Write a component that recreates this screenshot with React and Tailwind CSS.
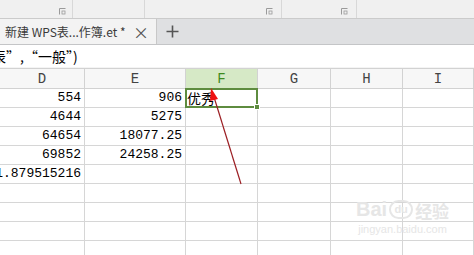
import React from 'react';

const cols = ['D', 'E', 'F', 'G', 'H', 'I'];
const rows = [
  ['554', '906', '优秀'],
  ['4644', '5275', ''],
  ['64654', '18077.25', ''],
  ['69852', '24258.25', ''],
  ['1.879515216', '', ''],
  ['', '', ''],
  ['', '', ''],
  ['', '', ''],
  ['', '', ''],
];

const gridCols = 'grid grid-cols-[85px_101px_72px_73px_72px_71px]';
const cjk = { fontFamily: '"Noto Sans CJK SC", "Liberation Sans", sans-serif' };
const sans = { fontFamily: '"Liberation Sans", Arial, sans-serif' };

function GroupMark() {
  return (
    <svg width="7" height="7" viewBox="0 0 7 7" className="text-[#9a9a9a]">
      <path d="M0.5 6.5V0.5H6.5" fill="none" stroke="currentColor" />
      <rect x="3" y="3" width="3" height="3" fill="none" stroke="currentColor" strokeWidth="0.8" />
    </svg>
  );
}

export default function App() {
  return (
    <div className="relative w-[474px] h-[255px] overflow-hidden bg-white" style={cjk}>
      {/* ribbon strip */}
      <div className="flex h-[19px] bg-[#f0f0f0] border-b border-[#cbcbcb]">
        <div className="w-[73px] border-r border-[#d8d8d8] flex items-end justify-end pr-[6px] pb-[3px]"><GroupMark /></div>
        <div className="w-[72px] border-r border-[#d8d8d8]" />
        <div className="w-[137px] border-r border-[#d8d8d8] flex items-end justify-end pr-[8px] pb-[3px]"><GroupMark /></div>
        <div className="w-[75px] border-r border-[#d8d8d8] flex items-end justify-end pr-[8px] pb-[3px]"><GroupMark /></div>
        <div className="flex-1" />
      </div>

      {/* tabs */}
      <div className="flex h-[26px] bg-[#dfe0e2] border-b border-[#c4c5c7]">
        <div className="w-[157px] bg-[#f3f3f3] border-r border-[#c8c8c8] flex items-center pl-[5px] text-[12px] text-[#3a3a3a]">
          <span className="whitespace-nowrap">新建 WPS表...作簿.et *</span>
          <span className="ml-auto mr-[7px] text-[#555] text-[16px] leading-none">×</span>
        </div>
        <div className="flex items-center pl-[9px]">
          <svg width="13" height="13" viewBox="0 0 13 13" className="text-[#555]">
            <path d="M6.5 0.5V12.5M0.5 6.5H12.5" stroke="currentColor" strokeWidth="1.6" />
          </svg>
        </div>
      </div>

      {/* formula bar */}
      <div className="h-[22px] bg-white flex items-center overflow-hidden">
        <span className="-ml-[8px] text-[14px] text-black whitespace-nowrap leading-none">表”,“一般”)</span>
      </div>
      <div className="h-[2px] bg-[#f4f4f4] border-b border-[#d2d2d2]" />

      {/* column headers */}
      <div className={`${gridCols} h-[20px] bg-[#f7f7f7] border-b border-[#d2d2d2] font-['Liberation_Mono',monospace]`}>
        {cols.map((c) => (
          <div
            key={c}
            className={`border-r border-[#d2d2d2] flex items-center justify-center text-[14px] ${c === 'F' ? 'bg-[#d6e9c6] text-[#3e8a1e]' : 'text-[#444]'}`}
          >
            {c}
          </div>
        ))}
      </div>

      {/* rows */}
      {rows.map((r, i) => (
        <div key={i} className={`${gridCols} h-[19px] font-['Liberation_Mono',monospace]`}>
          {cols.map((c, j) => (
            <div
              key={c}
              className={`border-r border-b border-[#d6d6d6] flex items-center text-[13px] text-black overflow-hidden whitespace-nowrap ${j === 2 ? 'justify-start pl-[1px]' : 'justify-end pr-[3px]'}`}
            >
              {j === 2 ? <span className="text-[14px]" style={cjk}>{r[j]}</span> : r[j]}
            </div>
          ))}
        </div>
      ))}

      {/* active cell */}
      <div className="absolute left-[185px] top-[88px] w-[73px] h-[20px] border-2 border-[#5e8c3f] pointer-events-none">
        <div className="absolute -right-[4px] -bottom-[4px] w-[6px] h-[6px] bg-[#5e8c3f] border border-white" />
      </div>

      {/* annotation arrow */}
      <svg className="absolute left-0 top-0" width="474" height="255" viewBox="0 0 474 255">
        <line x1="241" y1="184" x2="214" y2="97" stroke="#9c1f24" strokeWidth="1.2" />
        <path d="M211 88 L218 99 L210 101 Z" fill="#e11" />
      </svg>

      {/* watermark */}
      <div className="absolute left-[356px] top-[199px] flex flex-col items-center text-[#e6e6e6] pointer-events-none">
        <div className="flex items-end gap-[2px]">
          <span className="text-[20px] font-bold leading-none" style={sans}>Bai</span>
          <span className="w-[24px] h-[19px] rounded-full border-2 border-[#e6e6e6] text-[11px] font-bold leading-[15px] text-center" style={sans}>du</span>
          <span className="text-[17px] font-bold leading-none">经验</span>
        </div>
        <span className="text-[11px] leading-none mt-[5px]" style={sans}>jingyan.baidu.com</span>
      </div>
    </div>
  );
}
